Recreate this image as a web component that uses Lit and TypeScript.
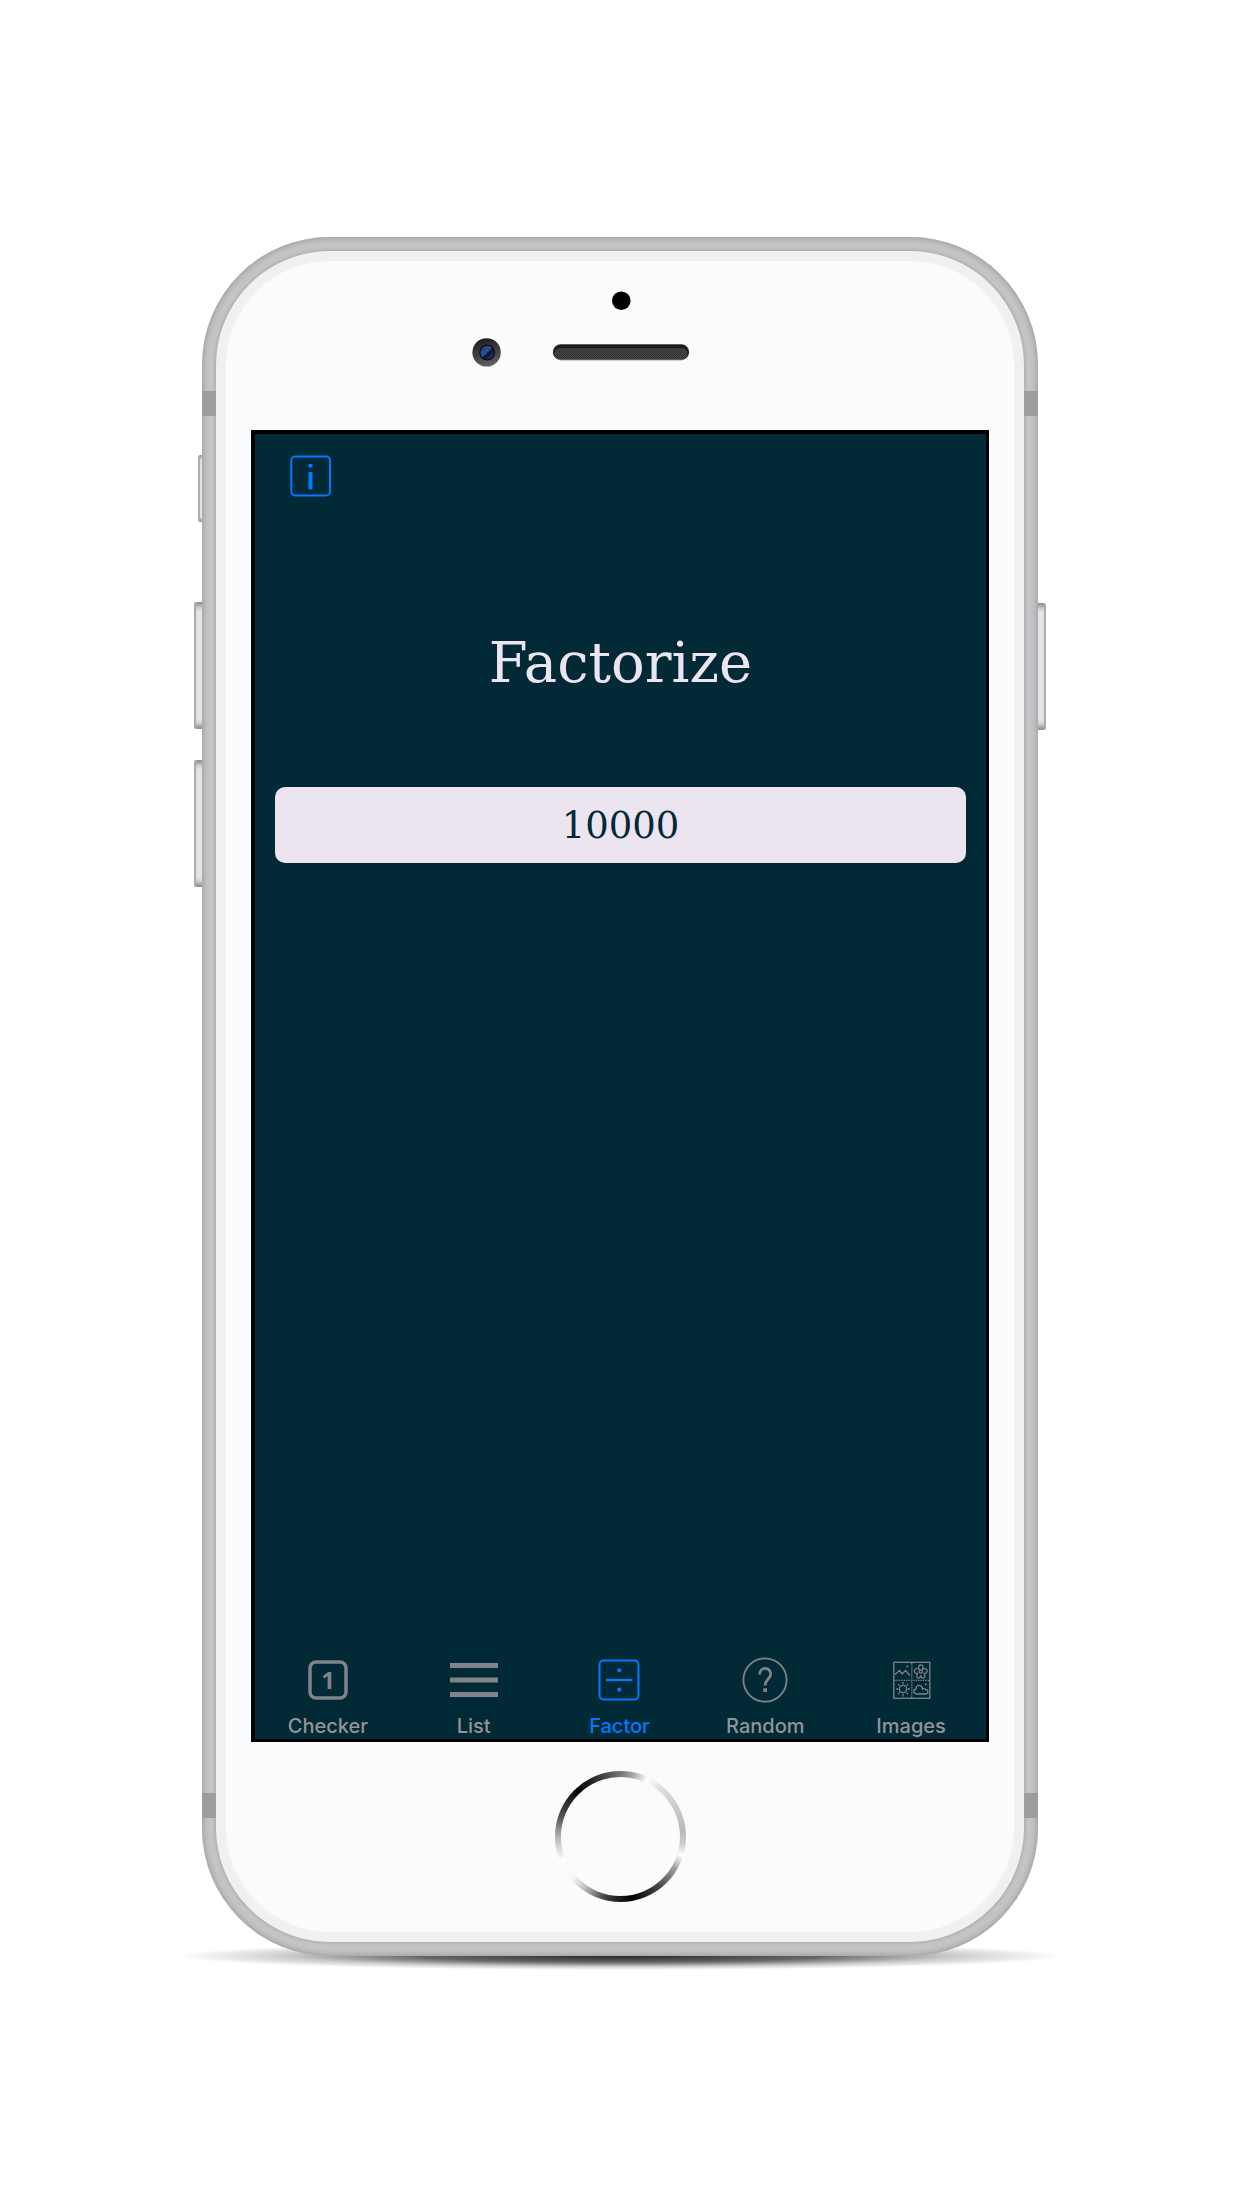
import { LitElement, html, svg, css, type TemplateResult } from "lit";
import { customElement, property, state } from "lit/decorators.js";

interface Tab {
  id: string;
  label: string;
  icon: TemplateResult;
}

const TABS: Tab[] = [
  {
    id: "checker",
    label: "Checker",
    icon: svg`
      <rect x="6" y="6" width="36" height="36" rx="6" fill="none" stroke="currentColor" stroke-width="3.5"/>
      <text class="digit" x="24" y="33" text-anchor="middle">1</text>`,
  },
  {
    id: "list",
    label: "List",
    icon: svg`<path d="M0 9.5H48M0 24H48M0 38.5H48" fill="none" stroke="currentColor" stroke-width="5"/>`,
  },
  {
    id: "factor",
    label: "Factor",
    icon: svg`
      <rect x="4.5" y="4.5" width="39" height="39" rx="4" fill="none" stroke="currentColor" stroke-width="2"/>
      <path d="M11 24H37.500" fill="none" stroke="currentColor" stroke-width="2.200"/>
      <circle cx="24.300" cy="14.300" r="2.100" fill="currentColor"/>
      <circle cx="24.300" cy="33.700" r="2.100" fill="currentColor"/>`,
  },
  {
    id: "random",
    label: "Random",
    icon: svg`
      <circle cx="24" cy="24" r="21.600" fill="none" stroke="currentColor" stroke-width="1.800"/>
      <path d="M18.600 18.500C18.600 10.500 29.700 10.500 29.700 18.200C29.700 22.400 24.100 23.600 24.100 29.500" fill="none" stroke="currentColor" stroke-width="2.800"/>
      <rect x="22.300" y="32.300" width="3.700" height="3.700" fill="currentColor"/>`,
  },
  {
    id: "images",
    label: "Images",
    icon: svg`
      <g fill="none" stroke="currentColor" stroke-width="1.300">
        <rect x="6.800" y="6.300" width="36" height="36"/>
        <path d="M24.800 7V42M7 24.400H43" stroke-dasharray="1.400 1"/>
        <path d="M8 18.500L12.500 14.500L15 18L18.500 14.500L23 19.500"/>
        <circle cx="33.800" cy="15.600" r="1.600"/>
        <path d="M31.900 13C30 7.500 37.600 7.500 35.700 13C40.500 10.800 42.300 17.200 37 17.500C40 21.800 34.500 24.200 33.800 19.300C33.100 24.200 27.600 21.800 30.600 17.500C25.300 17.200 27.100 10.800 31.900 13Z"/>
        <circle cx="16" cy="33" r="3.700"/>
        <path d="M16 26V28M16 38V40.500M9.300 33H11M21 33H23M11.300 28.300L12.500 29.500M19.500 36.500L21 38M11.300 38L12.500 36.500M19.500 29.500L21 28.300"/>
        <path d="M29.500 38H38.500C42 37.500 41.500 33.500 38.500 33.500C37.500 32 36 32 35.500 33C34.500 27.500 28.500 29 29 33C26 33.500 26 37.500 29.500 38Z"/>
      </g>
      <circle cx="20.300" cy="10.500" r="1" fill="currentColor"/>
      <circle cx="38.800" cy="28.300" r="1" fill="currentColor"/>`,
  },
];

@customElement("tab-bar")
class TabBar extends LitElement {
  @property() active = "factor";

  static styles = css`
    :host {
      display: block;
    }
    .bar {
      display: grid;
      grid-template-columns: repeat(5, 1fr);
      padding: 0 2px 1px 0;
    }
    .tab {
      display: flex;
      flex-direction: column;
      align-items: center;
      gap: 10px;
      color: #808488;
      text-decoration: none;
    }
    .label {
      font: 500 20px/24px Inter, "Liberation Sans", sans-serif;
      color: #929497;
    }
    .tab.on,
    .tab.on .label {
      color: #007aff;
    }
    .icon {
      width: 48px;
      height: 48px;
    }
    .digit {
      font: 700 24px "Open Sans", sans-serif;
      fill: currentColor;
    }
  `;

  private pick(event: Event, id: string) {
    event.preventDefault();
    this.dispatchEvent(new CustomEvent("tab-change", { detail: id }));
  }

  render() {
    return html`<nav class="bar">
      ${TABS.map(
        (tab) => html`<a
          class="tab ${tab.id === this.active ? "on" : ""}"
          href="#${tab.id}"
          aria-current=${tab.id === this.active ? "page" : "false"}
          @click=${(e: Event) => this.pick(e, tab.id)}
        >
          <svg class="icon" viewBox="0 0 48 48" aria-hidden="true">${tab.icon}</svg>
          <span class="label">${tab.label}</span>
        </a>`,
      )}
    </nav>`;
  }
}

@customElement("factor-screen")
class FactorScreen extends LitElement {
  @state() private tab = "factor";
  @state() private value = "10000";

  static styles = css`
    :host {
      display: flex;
      flex-direction: column;
      box-sizing: border-box;
      background: #022936;
      border: solid #000;
      border-width: 4px 3px 3px 4px;
      min-height: 1312px;
    }
    .content {
      flex: 1;
      display: flex;
      flex-direction: column;
      padding: 21px 20px 0;
    }
    .info {
      align-self: flex-start;
      margin-left: 15px;
      padding: 0;
      border: 0;
      background: none;
      color: #007aff;
      line-height: 0;
      cursor: pointer;
    }
    .info-icon {
      width: 42px;
      height: 42px;
    }
    .title {
      margin: 134px 0 92px;
      font: 400 56px/64px "DejaVu Serif", serif;
      color: #ece4ef;
      text-align: center;
    }
    .number {
      width: 100%;
      height: 76px;
      box-sizing: border-box;
      padding: 0 20px;
      border: 0;
      border-radius: 10px;
      background: #ece4ef;
      color: #022936;
      font: 400 37px "DejaVu Serif", serif;
      text-align: center;
    }
  `;

  render() {
    return html`
      <main class="content">
        <button class="info" aria-label="Information">
          <svg class="info-icon" viewBox="0 0 42 42" aria-hidden="true">
            <rect x="1.300" y="1.500" width="38.700" height="39" rx="4" fill="none" stroke="currentColor" stroke-width="2"/>
            <path d="M20.500 9V12.500M20.500 17V34.500" stroke="currentColor" stroke-width="4"/>
          </svg>
        </button>
        <h1 class="title" id="title">Factorize</h1>
        <input
          class="number"
          type="text"
          inputmode="numeric"
          aria-labelledby="title"
          .value=${this.value}
          @input=${(e: Event) => (this.value = (e.target as HTMLInputElement).value)}
        />
      </main>
      <tab-bar .active=${this.tab} @tab-change=${(e: CustomEvent) => (this.tab = e.detail)}></tab-bar>
    `;
  }
}

@customElement("app-root")
class AppRoot extends LitElement {
  static styles = css`
    :host {
      display: block;
      box-sizing: border-box;
      min-height: 100vh;
      padding: 237px 22px 252px 20px;
      background: #fff;
    }
    .phone {
      position: relative;
      z-index: 0;
      max-width: 836px;
      margin: 0 auto;
    }
    .frame {
      padding: 14px;
      border-radius: 128px;
      background: #c4c5c7;
      box-shadow: inset 0 0 6px 1px #98989a;
    }
    .glass {
      border: 10px solid #eff0f2;
      border-radius: 114px;
      background: #fafbfd;
      box-shadow: 0 0 4px #98989a;
      padding: 0 25px;
      display: flex;
      flex-direction: column;
      align-items: center;
    }
    .sensors {
      width: 300px;
      height: 169px;
    }
    .screen {
      align-self: stretch;
    }
    .home {
      box-sizing: border-box;
      width: 131px;
      height: 131px;
      margin: 29px 0 30px;
      padding: 6px;
      border: 0;
      border-radius: 50%;
      background: conic-gradient(
        #777 0deg, #aaa 12deg, #fff 25deg, #dedede 40deg, #b8b8b8 85deg,
        #d0d0d0 98deg, #fff 107deg, #a0a0a0 120deg, #484848 142deg,
        #000 170deg, #444 195deg, #bbb 214deg, #f4f4f4 228deg, #fff 248deg,
        #bbb 268deg, #555 288deg, #000 318deg, #3c3c3c 342deg, #777 360deg
      );
    }
    .home-face {
      display: block;
      height: 119px;
      border-radius: 50%;
      background: #fafbfd;
    }
    .band {
      position: absolute;
      width: 14px;
      height: 25px;
      background: #9c9d9f;
    }
    .band.left {
      left: 0;
    }
    .band.right {
      right: 0;
    }
    .band.upper {
      top: 154px;
    }
    .band.lower {
      bottom: 138px;
    }
    .key {
      position: absolute;
      z-index: -1;
      box-sizing: border-box;
      width: 12px;
      height: 127px;
      border-radius: 3px;
      background: linear-gradient(#858686, #d0d1d2 6px, #e4e5e7 10px, #e4e5e7 117px, #d0d1d2 121px, #858686);
      box-shadow: inset 2px 0 1px #a9aaab;
    }
    .key.mute {
      left: -4px;
      top: 218px;
      height: 67px;
      background: linear-gradient(#858686, #e4e5e7 5px, #e4e5e7 62px, #858686);
    }
    .key.up {
      left: -8px;
      top: 365px;
    }
    .key.down {
      left: -8px;
      top: 523px;
    }
    .key.power {
      right: -8px;
      top: 366px;
      box-shadow: inset -2px 0 1px #a9aaab;
    }
    .shade {
      position: absolute;
      z-index: -1;
      left: -26px;
      right: -26px;
      bottom: -14px;
      height: 28px;
      background: radial-gradient(closest-side, rgba(0, 0, 0, 0.85), rgba(0, 0, 0, 0.6) 45%, rgba(0, 0, 0, 0.2) 75%, transparent);
    }
  `;

  render() {
    return html`
      <div class="phone">
        <span class="shade"></span>
        <span class="key mute"></span>
        <span class="key up"></span>
        <span class="key down"></span>
        <span class="key power"></span>
        <div class="frame">
          <div class="glass">
            <svg class="sensors" viewBox="0 0 300 169" aria-hidden="true">
              <defs>
                <linearGradient id="bezel" x1="0" y1="0" x2="0.300" y2="1">
                  <stop offset="0" stop-color="#161616"/><stop offset="1" stop-color="#5c5c5c"/>
                </linearGradient>
                <linearGradient id="lens" x1="0" y1="0" x2="1" y2="1">
                  <stop offset="0" stop-color="#1c3768"/><stop offset="0.450" stop-color="#2f4f96"/>
                  <stop offset="0.580" stop-color="#081022"/><stop offset="0.800" stop-color="#1c3264"/>
                  <stop offset="1" stop-color="#0b1530"/>
                </linearGradient>
                <pattern id="mesh" width="2" height="2" patternUnits="userSpaceOnUse">
                  <rect width="2" height="2" fill="#2c2d2e"/>
                  <rect width="1" height="1" fill="#4a4b4d"/><rect x="1" y="1" width="1" height="1" fill="#4a4b4d"/>
                </pattern>
              </defs>
              <circle cx="151.300" cy="39.700" r="9.300" fill="#000"/>
              <circle cx="16.600" cy="91.400" r="14.200" fill="url(#bezel)"/>
              <circle cx="17.200" cy="91.500" r="8" fill="#0c0d12"/>
              <circle cx="17.200" cy="91.500" r="6.800" fill="url(#lens)"/>
              <rect x="82.800" y="83" width="136.400" height="16.500" rx="8.200" fill="#9fa0a1"/>
              <rect x="83" y="83.500" width="136" height="15" rx="7.500" fill="#1b1c1d"/>
              <rect x="84.500" y="87" width="133" height="11" rx="5.500" fill="url(#mesh)"/>
            </svg>
            <factor-screen class="screen"></factor-screen>
            <button class="home" aria-label="Home"><span class="home-face"></span></button>
          </div>
        </div>
        <span class="band left upper"></span>
        <span class="band right upper"></span>
        <span class="band left lower"></span>
        <span class="band right lower"></span>
      </div>
    `;
  }
}
